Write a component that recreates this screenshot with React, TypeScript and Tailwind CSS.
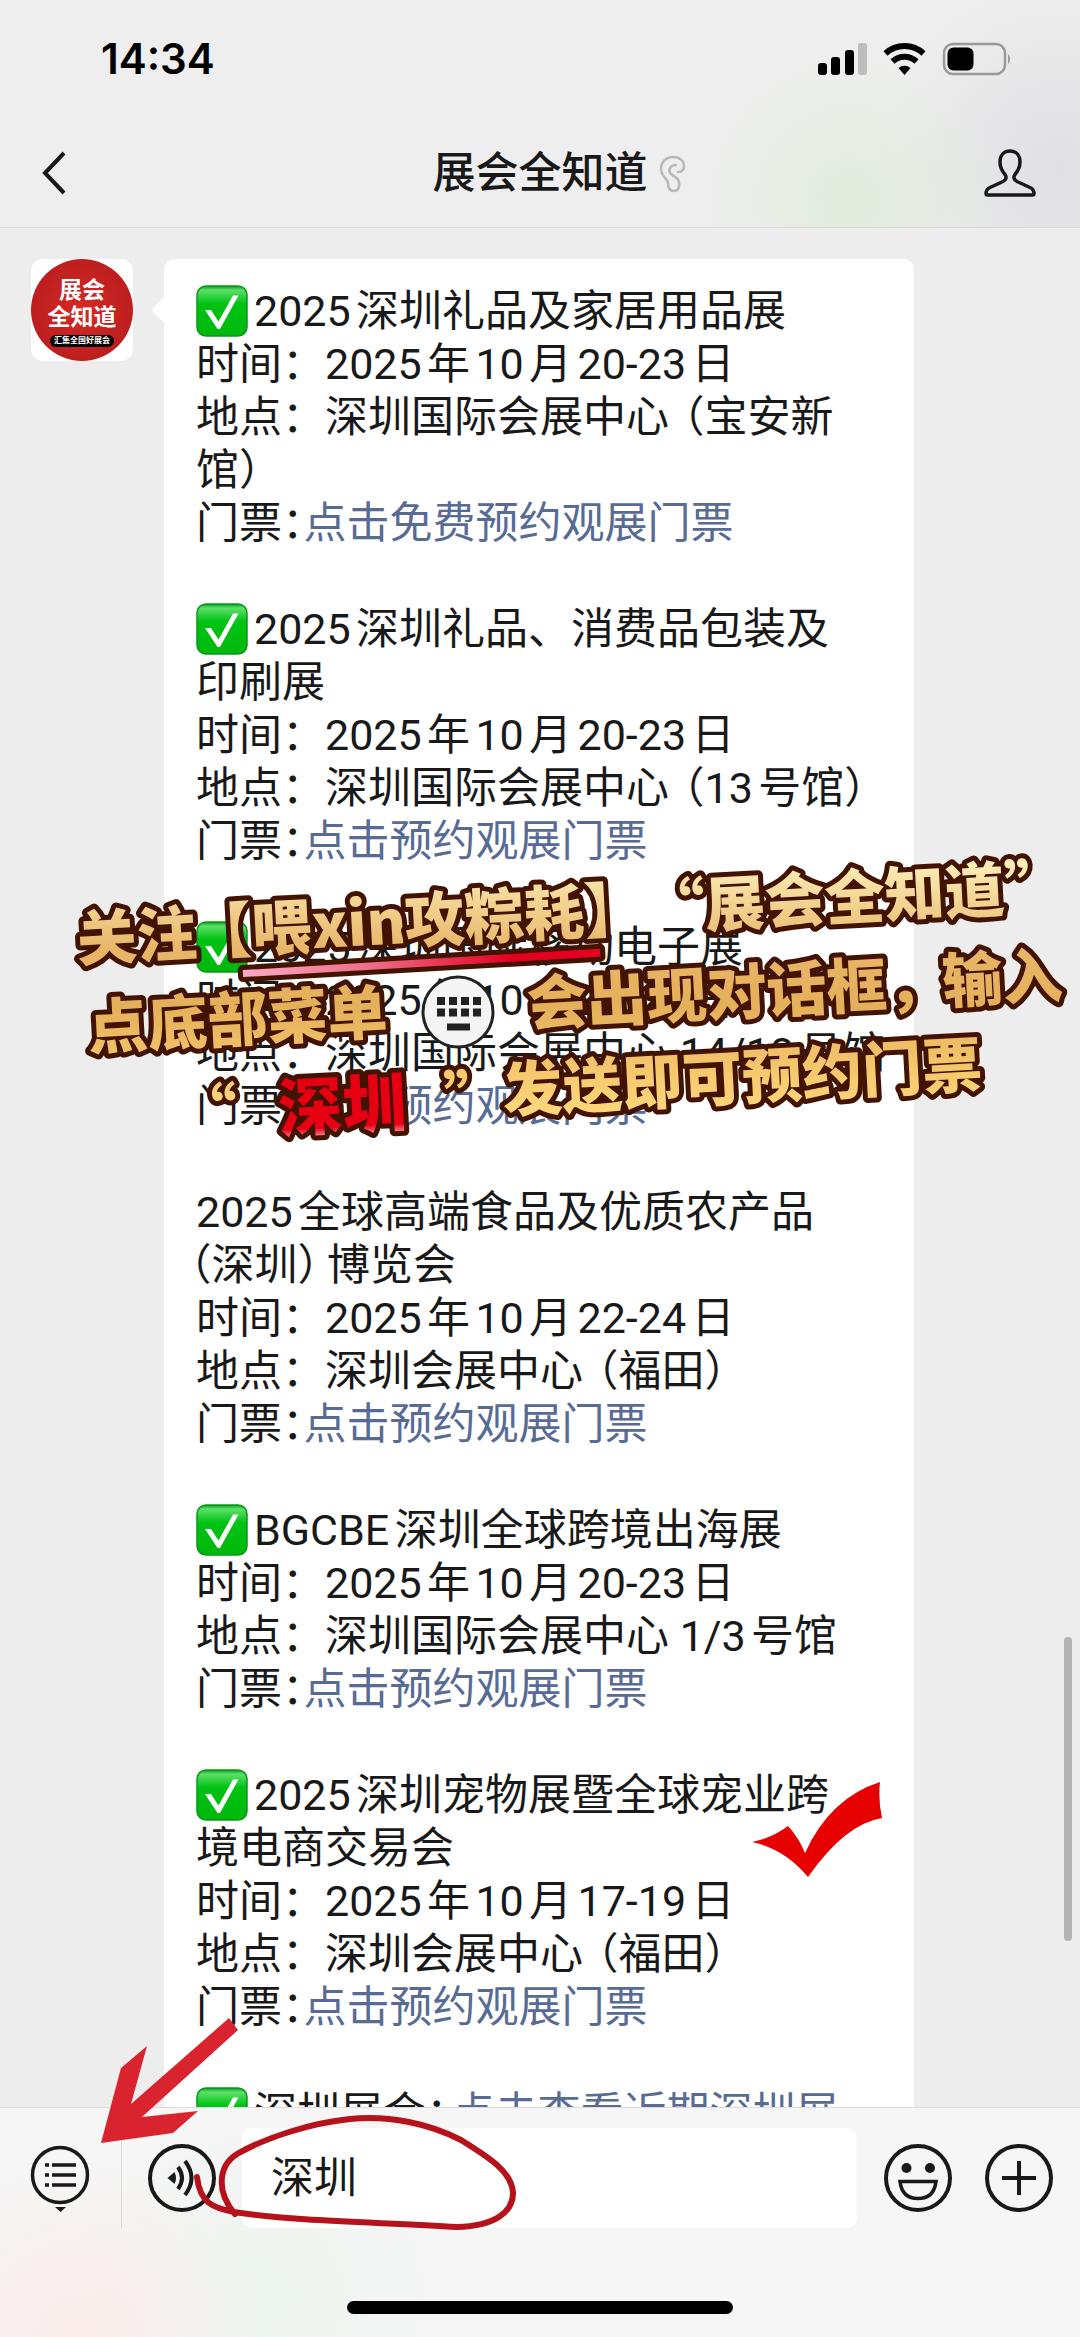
import React, { ReactNode } from "react";

function Check() {
  return (
    <svg viewBox="0 0 52 52" className="-mt-3 -mb-1 mr-1.5 inline-block size-[52px] align-middle" role="img" aria-label="✅">
      <defs>
        <linearGradient id="greenBox" x1="0" y1="0" x2="0" y2="1">
          <stop offset="0" stopColor="#0a9a1c" />
          <stop offset="0.08" stopColor="#5ee06a" />
          <stop offset="0.35" stopColor="#00c314" />
          <stop offset="1" stopColor="#00b80c" />
        </linearGradient>
      </defs>
      <rect x="1" y="1" width="50" height="50" rx="9" fill="url(#greenBox)" stroke="#069a16" strokeWidth="1.5" />
      <path d="M9 25h6L22.500 36.500 37 10.500H42.500L24 44H21.500Z" fill="#fff" />
    </svg>
  );
}

const Open = () => <span className="ml-3.5 [font-feature-settings:'halt']">（</span>;
const Close = () => <span className="mr-2 [font-feature-settings:'halt']">）</span>;
const Colon = () => <span className="[font-feature-settings:'halt']">：</span>;

function Line({ children }: { children?: ReactNode }) {
  return <p className="h-[53px] whitespace-nowrap">{children}</p>;
}

function Ticket({ children = "点击预约观展门票" }: { children?: ReactNode }) {
  return (
    <Line>
      门票<Colon />
      <a href="#ticket" className="text-[#576b95]">{children}</a>
    </Line>
  );
}

function Avatar() {
  return (
    <div className="flex h-[102px] w-[102px] shrink-0 overflow-hidden rounded-xl bg-white">
      <div className="flex size-full flex-col items-center justify-center rounded-full bg-radial from-[#d42a26] to-[#b3191b] pt-1 font-bold text-white">
        <span className="text-[23px] leading-[27px]">展会</span>
        <span className="text-[23px] leading-[27px]">全知道</span>
        <span className="mt-1 rounded-md bg-black px-1 text-[8px] leading-[12px]">汇集全国好展会</span>
      </div>
    </div>
  );
}

function Header() {
  return (
    <header className="relative z-10 shrink-0 border-b border-[#d9d9d9] bg-[#eeeeee] bg-[radial-gradient(circle_at_850px_200px,#e2ecdc_0,#e2ecdc00_150px),radial-gradient(circle_at_1060px_170px,#e0e0e3_0,#e0e0e300_190px)]">
      <div className="flex h-[118px] items-center justify-between pr-[68px] pl-[101px]">
        <span className="font-['Inter'] text-[42px] leading-[50px] font-semibold text-black">14:34</span>
        <svg viewBox="0 0 194 34" className="h-[34px] w-[194px]" aria-label="信号、无线网络、电量">
          <g fill="#000">
            <rect x="0" y="21" width="9" height="12" rx="3" />
            <rect x="13" y="15" width="9" height="18" rx="3" />
            <rect x="27" y="8" width="9" height="25" rx="3" />
            <rect x="40" y="1" width="9" height="32" rx="3" fill="#bdbdbd" />
          </g>
          <g fill="none" stroke="#000" strokeWidth="6">
            <path d="M67.500 11.500a28 28 0 0 1 38 0" />
            <path d="M74.500 19.500a17.500 17.500 0 0 1 24 0" />
          </g>
          <path d="M86.500 33l-6-7a9 9 0 0 1 12 0z" fill="#000" />
          <rect x="126" y="2" width="61" height="30" rx="9" fill="none" stroke="#999" strokeWidth="2.500" />
          <rect x="129.500" y="5.500" width="26" height="23" rx="6" fill="#000" />
          <path d="M190 12q4 5 0 10z" fill="#999" />
        </svg>
      </div>
      <div className="grid h-[109px] grid-cols-[1fr_auto_1fr] items-center px-9">
        <button aria-label="返回" className="w-10">
          <svg viewBox="0 0 40 48" className="h-12 w-10" fill="none" stroke="#191919" strokeWidth="4">
            <path d="M28 4L9 24l19 20" />
          </svg>
        </button>
        <h1 className="relative text-[43px] leading-[60px] font-medium text-[#191919]">
          展会全知道
          <svg viewBox="0 0 28 38" className="absolute top-3 left-full ml-2.5 h-[38px] w-7" fill="none" stroke="#b8b8b8" strokeWidth="2.500" strokeLinecap="round">
            <path d="M18 10c-5 0-8 4-6 8 2 3 8 4 9 9 1 5-1 9-5 9-5 0-6-4-6-8 0-5-7-6-7-14C3 7 8 2 15 2c7 0 11 4 11 9 0 4-2 6-6 6" />
          </svg>
        </h1>
        <button aria-label="公众号资料" className="mr-2 justify-self-end">
          <svg viewBox="0 0 52 50" className="h-[50px] w-[52px]" fill="none" stroke="#191919" strokeWidth="3.500" strokeLinejoin="round">
            <path d="M26 3c-6 0-10 4-10 11 0 6 2 9 5 12.500 2 2.500 1 5.500-2 7L6 39.500c-3 1.300-4 4-4 6 0 1 .5 1.500 1.500 1.500h45c1 0 1.500-.5 1.500-1.500 0-2-1-4.700-4-6L33 33.500c-3-1.500-4-4.500-2-7 3-3.500 5-6.500 5-12.500 0-7-4-11-10-11z" />
          </svg>
        </button>
      </div>
    </header>
  );
}

function Chat() {
  return (
    <main className="relative min-h-0 flex-1 overflow-hidden bg-[#ededed]">
      <div className="flex items-start gap-[31px] pt-[31px] pl-[31px]">
        <Avatar />
        <article className="relative w-[750px] rounded-[10px] bg-white px-8 pt-[26px] text-[43px] leading-[53px] text-[#191919] [text-autospace:normal]">
          <svg viewBox="0 0 13 28" className="absolute top-[37px] -left-3 h-7 w-[13px]" fill="#fff">
            <path d="M13 0L2 11q-3 3 0 6l11 11z" />
          </svg>
          <Line><Check />2025深圳礼品及家居用品展</Line>
          <Line>时间：2025年10月20-23日</Line>
          <Line>地点：深圳国际会展中心<Open />宝安新</Line>
          <Line>馆<Close /></Line>
          <Ticket>点击免费预约观展门票</Ticket>
          <Line />
          <Line><Check />2025深圳礼品、消费品包装及</Line>
          <Line>印刷展</Line>
          <Line>时间：2025年10月20-23日</Line>
          <Line>地点：深圳国际会展中心<Open />13号馆<Close /></Line>
          <Ticket />
          <Line />
          <Line><Check />2025深圳国际移动电子展</Line>
          <Line>时间：2025年10月20-23日</Line>
          <Line>地点：深圳国际会展中心 14/18号馆</Line>
          <Ticket />
          <Line />
          <Line>2025全球高端食品及优质农产品</Line>
          <Line><span className="-ml-1.5 [font-feature-settings:'halt']">（</span>深圳<Close />博览会</Line>
          <Line>时间：2025年10月22-24日</Line>
          <Line>地点：深圳会展中心<Open />福田<Close /></Line>
          <Ticket />
          <Line />
          <Line><Check />BGCBE深圳全球跨境出海展</Line>
          <Line>时间：2025年10月20-23日</Line>
          <Line>地点：深圳国际会展中心 1/3号馆</Line>
          <Ticket />
          <Line />
          <Line><Check />2025深圳宠物展暨全球宠业跨</Line>
          <Line>境电商交易会</Line>
          <Line>时间：2025年10月17-19日</Line>
          <Line>地点：深圳会展中心<Open />福田<Close /></Line>
          <Ticket />
          <Line />
          <Line>
            <Check />深圳展会<Colon />
            <a href="#more" className="ml-1 text-[#576b95]">点击查看近期深圳展</a>
          </Line>
        </article>
      </div>
      <div className="absolute right-2 bottom-[166px] h-[304px] w-2 rounded-full bg-[#b3b3b3]" />
    </main>
  );
}

function Footer() {
  return (
    <footer className="flex h-[230px] shrink-0 flex-col border-t border-[#dcdcdc] bg-[#f6f6f6] bg-[radial-gradient(circle_at_80px_230px,#faecea_0,#faecea00_180px),radial-gradient(circle_at_260px_190px,#eef5f0_0,#eef5f000_200px)]">
      <div className="flex items-center pt-5">
        <button aria-label="菜单" className="flex h-[100px] w-[122px] items-center border-r border-[#dcdcdc] pl-[30px]">
          <svg viewBox="0 0 60 68" className="h-[68px] w-[60px]" fill="none" stroke="#191919" strokeWidth="3.500">
            <circle cx="30" cy="31" r="27.500" />
            <path d="M22 21h24M22 31h24M22 41h24M15 21h4M15 31h4M15 41h4" />
            <path d="M25 63h11l-5.500 5z" fill="#191919" stroke="none" />
          </svg>
        </button>
        <button aria-label="语音" className="ml-[25px]">
          <svg viewBox="0 0 70 70" className="size-[70px]" fill="none" stroke="#191919" strokeWidth="4">
            <circle cx="35" cy="35" r="32" />
            <path d="M20.500 35l7-6q3 6 0 12z" fill="#191919" stroke="none" />
            <path d="M31 24q8 11 0 22M38 18q13 17 0 34" />
          </svg>
        </button>
        <input
          aria-label="消息"
          defaultValue="深圳"
          className="ml-[25px] h-[100px] min-w-0 flex-1 rounded-[10px] bg-white pb-2 pl-[29px] text-[43px] text-[#191919] outline-none"
        />
        <button aria-label="表情" className="ml-[26px]">
          <svg viewBox="0 0 70 70" className="size-[70px]" fill="none" stroke="#191919" strokeWidth="4">
            <circle cx="35" cy="35" r="32" />
            <circle cx="23.500" cy="25" r="5" fill="#191919" stroke="none" />
            <circle cx="47" cy="25" r="5" fill="#191919" stroke="none" />
            <path d="M17 38.500h36q-2 17-18 17t-18-17z" strokeWidth="3.500" />
          </svg>
        </button>
        <button aria-label="更多" className="mr-[26px] ml-[31px]">
          <svg viewBox="0 0 70 70" className="size-[70px]" fill="none" stroke="#191919" strokeWidth="4">
            <circle cx="35" cy="35" r="32" />
            <path d="M18 35h34M35 18v34" />
          </svg>
        </button>
      </div>
      <div className="mx-auto mt-[73px] h-[13px] w-[386px] rounded-full bg-black" />
    </footer>
  );
}

function Annotations() {
  return (
    <svg viewBox="0 0 1080 2337" className="pointer-events-none absolute top-0 left-0 z-20 w-full">
      <defs>
        <linearGradient id="gold" gradientUnits="userSpaceOnUse" x1="83" y1="850" x2="69" y2="1110">
          <stop offset="0" stopColor="#fff6c4" />
          <stop offset="0.38" stopColor="#e8b668" />
          <stop offset="0.6" stopColor="#e5b05a" />
          <stop offset="1" stopColor="#ffd67a" />
        </linearGradient>
        <linearGradient id="stripe" x1="0" x2="1" y1="0" y2="0">
          <stop offset="0" stopColor="#fba9c4" />
          <stop offset="0.35" stopColor="#ee6f8b" />
          <stop offset="0.75" stopColor="#e4001f" />
        </linearGradient>
        <linearGradient id="red" x1="0" x2="0" y1="0" y2="1">
          <stop offset="0.78" stopColor="#e60012" />
          <stop offset="0.92" stopColor="#ffc9d0" />
        </linearGradient>
      </defs>
      <g
        transform="rotate(-3.1 77 961)"
        className="font-['Noto_Sans_CJK_SC',sans-serif] text-[60px] font-black"
        fill="url(#gold)"
        stroke="#431302"
        strokeWidth="10"
        strokeLinejoin="round"
        paintOrder="stroke"
      >
        <text x="78" y="961">关注</text>
        <text x="193" y="961">【喂</text>
        <text x="313" y="961">xin</text>
        <text x="406" y="961">攻粽耗】</text>
        <text x="647" y="961">“展会全知道”</text>
        <path d="M242 979L600 977V985L242 986Z" fill="url(#stripe)" />
        <text x="84" y="1050">点底部菜单</text>
        <text x="524" y="1050">会出现对话框，</text>
        <text x="940" y="1050">输入</text>
        <text x="169" y="1141">“</text>
        <text x="270" y="1143" className="text-[64px]" fill="url(#red)">深圳</text>
        <text x="436" y="1141">”</text>
        <text x="495" y="1135">发送即可预约门票</text>
      </g>
      <g>
        <circle cx="458" cy="1012" r="35" fill="#f4f4f4" stroke="#222" strokeWidth="3" />
        <path d="M437 1001h44M437 1012.500h44" stroke="#222" strokeWidth="8" strokeDasharray="8 4" />
        <path d="M447 1027h23" stroke="#222" strokeWidth="7" />
      </g>
      <path d="M880 1782Q878 1800 882 1818Q845 1824 808 1877Q785 1849 752 1842Q772 1838 788 1826Q799 1838 805 1853Q830 1798 880 1782Z" fill="#e60000" />
      <path d="M229 2018L238 2030L142 2117L198 2111L173 2133L101 2143L121 2068L147 2046L131 2104Z" fill="#d9232e" />
      <path
        d="M197 2177C200 2203 213 2208 234 2212C300 2222 380 2222 457 2227C495 2226 513 2212 513 2193C512 2172 490 2158 461 2140C430 2124 390 2115 350 2119C310 2123 265 2138 237 2154C218 2166 216 2192 235 2214"
        fill="none"
        stroke="#b5121b"
        strokeWidth="6"
        strokeLinecap="round"
        strokeLinejoin="round"
      />
    </svg>
  );
}

export default function App() {
  return (
    <div lang="zh-CN" className="relative flex h-screen flex-col overflow-hidden font-['Roboto','Noto_Sans_CJK_SC',sans-serif]">
      <Header />
      <Chat />
      <Footer />
      <Annotations />
    </div>
  );
}
